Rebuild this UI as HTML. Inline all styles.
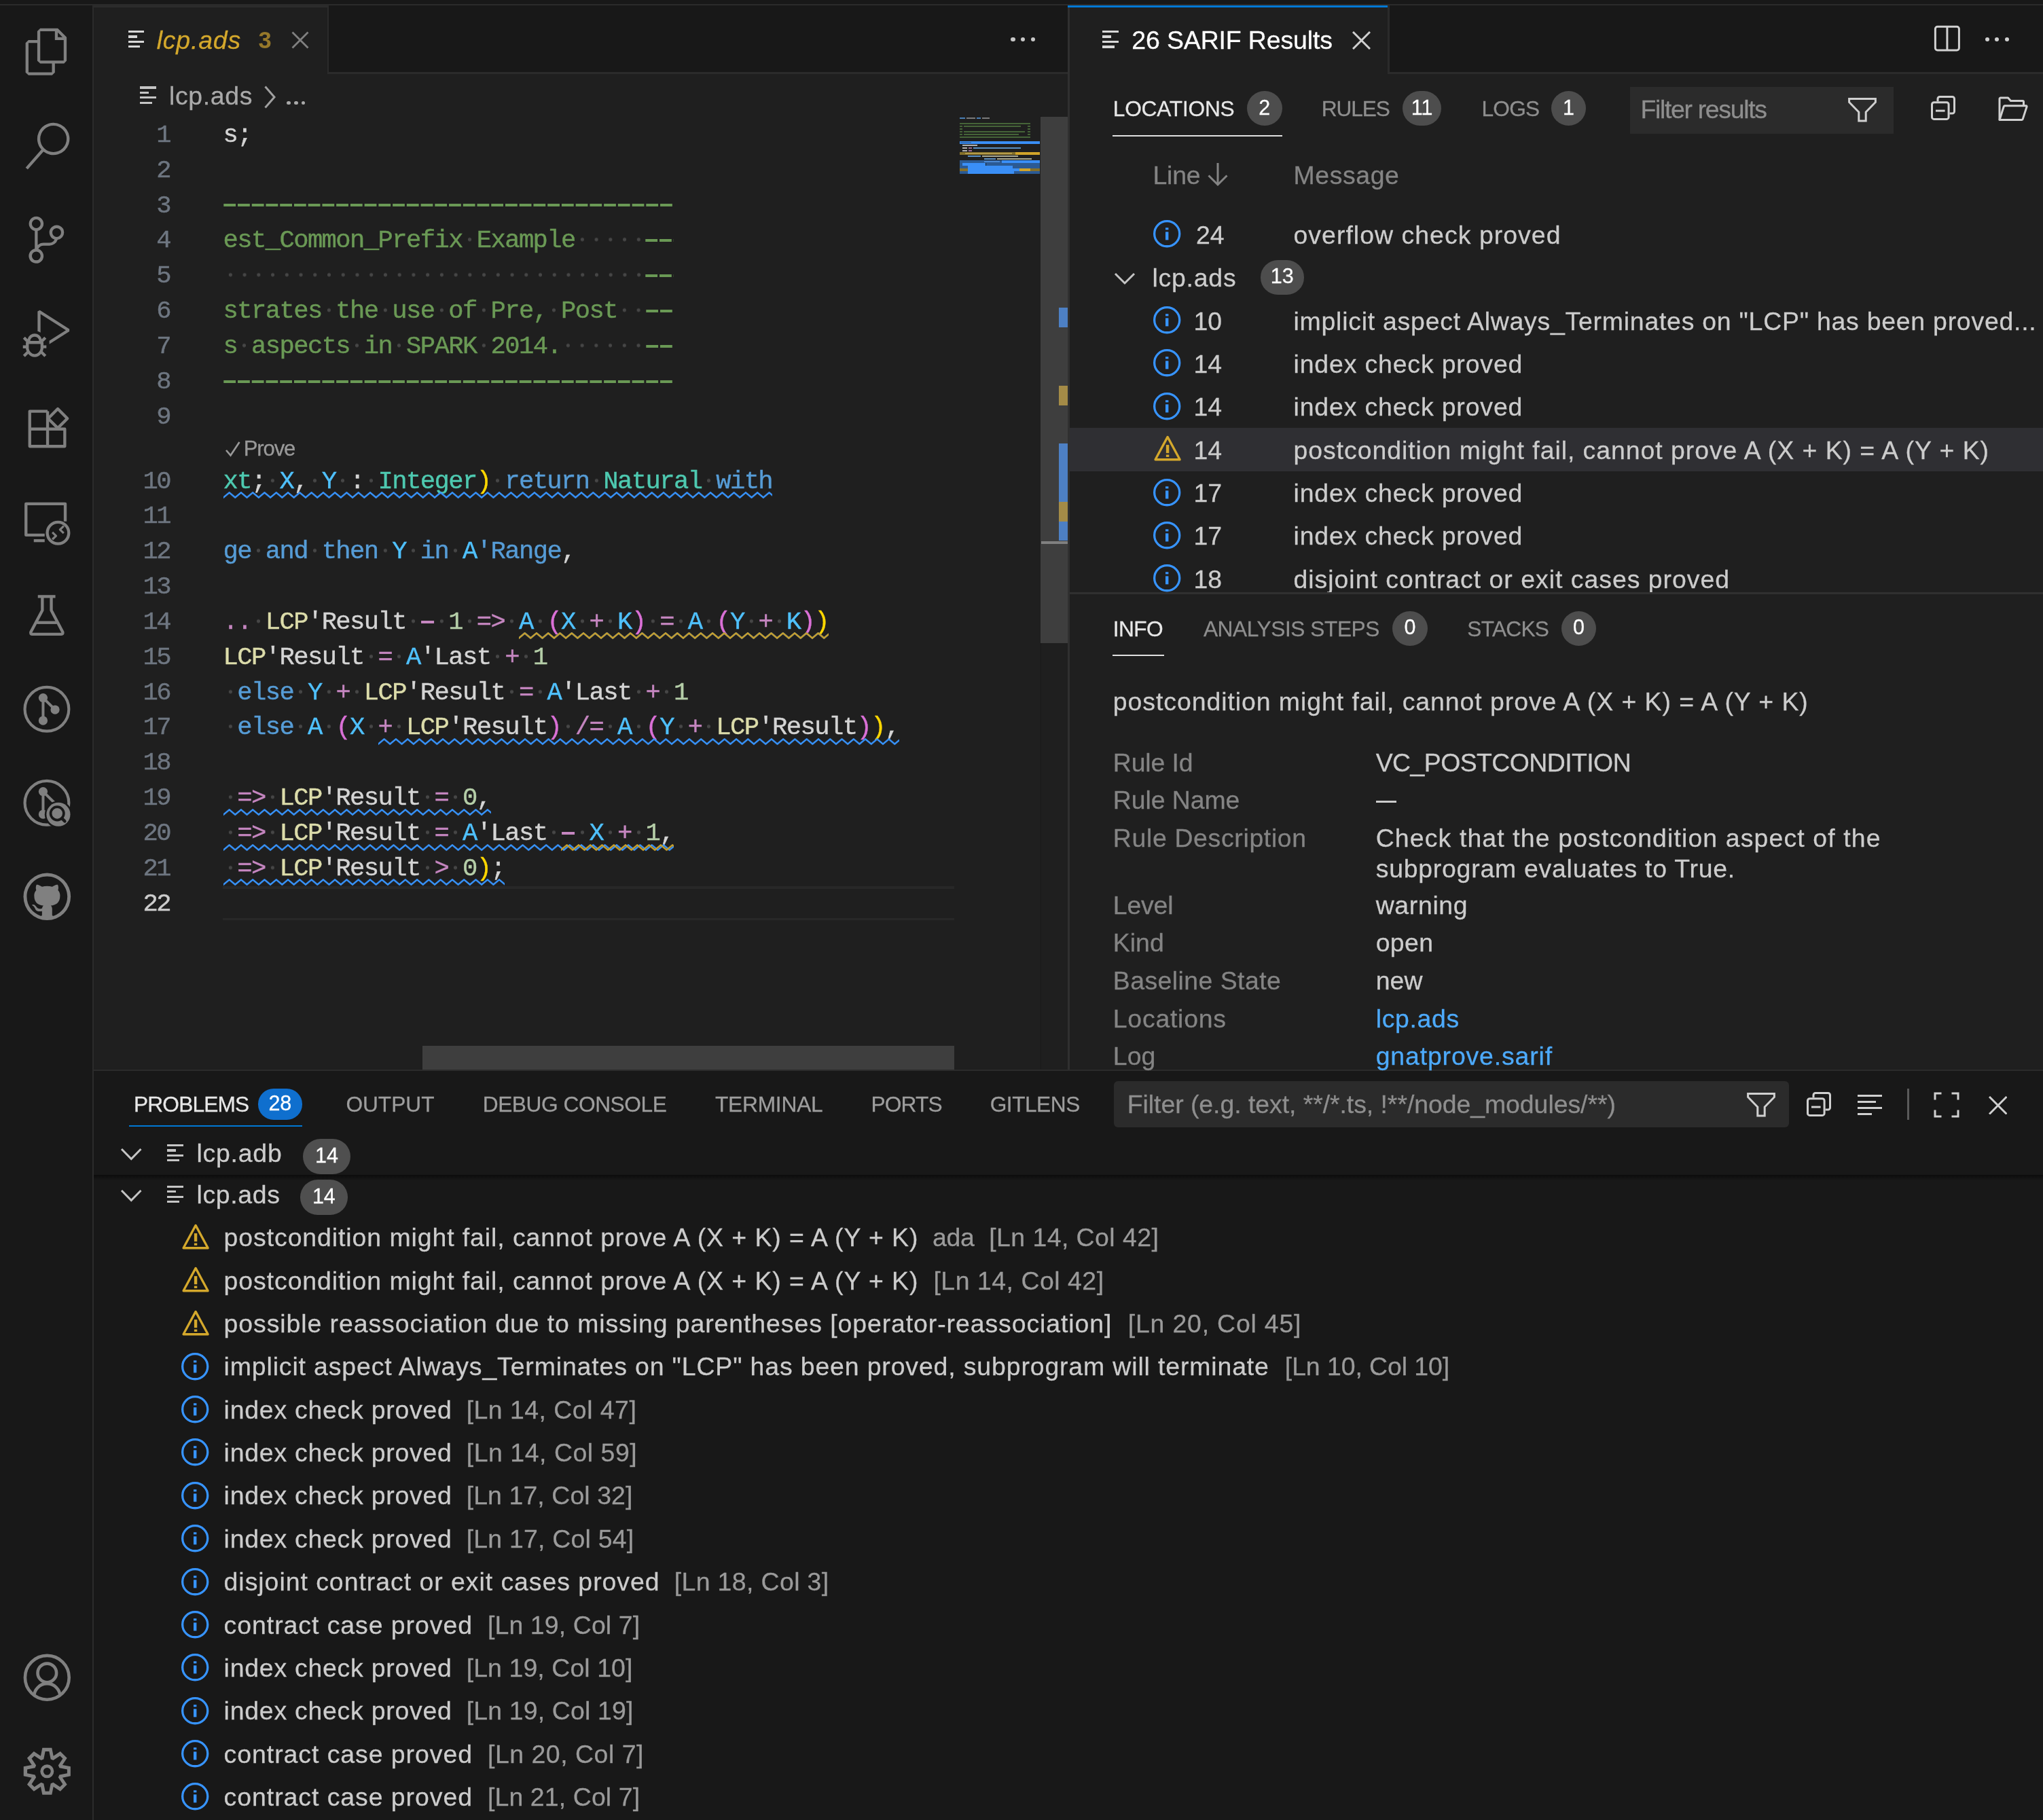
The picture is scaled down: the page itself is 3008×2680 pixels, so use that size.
<!DOCTYPE html>
<html><head><meta charset="utf-8"><title>lcp.ads</title>
<style>
html,body{margin:0;padding:0;background:#181818;overflow:hidden}
#r{position:relative;width:3008px;height:2680px;overflow:hidden;will-change:transform;background:#181818;font-family:'Liberation Sans', sans-serif;color:#cccccc}
#r div,#r svg{position:absolute}
#r span{white-space:pre}
.w{background:radial-gradient(circle,#464646 2.2px,rgba(70,70,70,0) 3.0px) 0 -1.3px/20.736px 100%}
.c{-webkit-text-stroke:0.4px currentColor}
.dm{background:linear-gradient(90deg,#c586c0 18.4px,rgba(197,134,192,0) 18.4px) 0.8px calc(50% + 0.1px)/20.736px 3.8px repeat-x}
.d{background:linear-gradient(90deg,#6a9955 18.2px,rgba(106,153,85,0) 18.2px) 0.3px calc(50% + 0.1px)/20.736px 4.4px repeat-x}
</style></head><body><div id="r">
<div style="left:0px;top:0px;width:3008px;height:6px;background:#181818;"></div>
<div style="left:0px;top:6px;width:3008px;height:2px;background:#2b2b2b;"></div>
<div style="left:0px;top:8px;width:136px;height:2672px;background:#181818;"></div>
<div style="left:136px;top:8px;width:2px;height:2672px;background:#2b2b2b;"></div>
<div style="left:138px;top:8px;width:1434px;height:98px;background:#181818;"></div>
<div style="left:138px;top:106px;width:1434px;height:3px;background:#2b2b2b;"></div>
<div style="left:138px;top:8px;width:344px;height:101px;background:#1f1f1f;"></div>
<div style="left:138px;top:8px;width:344px;height:3px;background:#2b2b2b;"></div>
<div style="left:482px;top:8px;width:2px;height:98px;background:#2b2b2b;"></div>
<div style="left:138px;top:109px;width:1434px;height:1466px;background:#1f1f1f;"></div>
<div style="left:1572px;top:8px;width:3px;height:1567px;background:#303030;"></div>
<div style="left:1575px;top:8px;width:1433px;height:98px;background:#181818;"></div>
<div style="left:1575px;top:106px;width:1433px;height:3px;background:#2b2b2b;"></div>
<div style="left:1575px;top:8px;width:468px;height:101px;background:#1f1f1f;"></div>
<div style="left:1572px;top:8px;width:471px;height:3px;background:#0078d4;"></div>
<div style="left:2043px;top:8px;width:3px;height:98px;background:#2b2b2b;"></div>
<div style="left:1575px;top:109px;width:1433px;height:1466px;background:#1f1f1f;"></div>
<div style="left:138px;top:1575px;width:2870px;height:2.5px;background:#2b2b2b;"></div>
<div style="left:138px;top:1577px;width:2870px;height:1103px;background:#181818;"></div>
<div style="left:188.8px;top:44.9px;width:23.5px;height:3.4px;background:#d7d7d7;"></div>
<div style="left:188.8px;top:52.2px;width:12.9px;height:3.4px;background:#d7d7d7;"></div>
<div style="left:188.8px;top:59.7px;width:23.5px;height:3.4px;background:#d7d7d7;"></div>
<div style="left:188.8px;top:67.1px;width:17.6px;height:3.4px;background:#d7d7d7;"></div>
<div style="left:230.70px;top:32.63px;line-height:52px;font-family:'Liberation Sans', sans-serif;font-size:37.44px;color:#d4a82c;letter-spacing:0.817px;white-space:pre;font-style:italic;-webkit-text-stroke:0.28px;">lcp.ads</div>
<div style="left:380.40px;top:35.45px;line-height:48px;font-family:'Liberation Sans', sans-serif;font-size:34.5px;color:#96782a;letter-spacing:-0.087px;white-space:pre;font-weight:700;">3</div>
<svg style="left:429px;top:45.5px;" width="26" height="26" viewBox="0 0 26 26"><path d="M1.5 1.5 L24.5 24.5 M24.5 1.5 L1.5 24.5" stroke="#808080" stroke-width="2.8" fill="none"/></svg>
<div style="left:1488.3999999999999px;top:54.6px;width:6.4px;height:6.4px;background:#c8c8c8;border-radius:50%"></div>
<div style="left:1503.0px;top:54.6px;width:6.4px;height:6.4px;background:#c8c8c8;border-radius:50%"></div>
<div style="left:1517.6px;top:54.6px;width:6.4px;height:6.4px;background:#c8c8c8;border-radius:50%"></div>
<div style="left:206.3px;top:127.3px;width:24.0px;height:3.4px;background:#c5c5c5;"></div>
<div style="left:206.3px;top:134.6px;width:13.2px;height:3.4px;background:#c5c5c5;"></div>
<div style="left:206.3px;top:142.1px;width:24.0px;height:3.4px;background:#c5c5c5;"></div>
<div style="left:206.3px;top:149.5px;width:18.0px;height:3.4px;background:#c5c5c5;"></div>
<div style="left:249.10px;top:115.23px;line-height:52px;font-family:'Liberation Sans', sans-serif;font-size:37.44px;color:#a9a9a9;letter-spacing:0.617px;white-space:pre;-webkit-text-stroke:0.28px;">lcp.ads</div>
<svg style="left:388px;top:124px;" width="20" height="38" viewBox="0 0 20 38"><path d="M2.5 3.5 L16 19 L2.5 34.5" stroke="#a0a0a0" stroke-width="3" fill="none"/></svg>
<div style="left:422.1px;top:148.6px;width:5.8px;height:5.8px;background:#a9a9a9;border-radius:50%"></div>
<div style="left:432.90000000000003px;top:148.6px;width:5.8px;height:5.8px;background:#a9a9a9;border-radius:50%"></div>
<div style="left:443.70000000000005px;top:148.6px;width:5.8px;height:5.8px;background:#a9a9a9;border-radius:50%"></div>
<div class="c" style="right:2758.084px;top:173.88px;line-height:51.84px;font-family:'Liberation Mono', monospace;font-size:37.2px;color:#6e7681;letter-spacing:-2.584px">1</div>
<div class="c" style="right:2758.084px;top:225.72px;line-height:51.84px;font-family:'Liberation Mono', monospace;font-size:37.2px;color:#6e7681;letter-spacing:-2.584px">2</div>
<div class="c" style="right:2758.084px;top:277.56px;line-height:51.84px;font-family:'Liberation Mono', monospace;font-size:37.2px;color:#6e7681;letter-spacing:-2.584px">3</div>
<div class="c" style="right:2758.084px;top:329.40px;line-height:51.84px;font-family:'Liberation Mono', monospace;font-size:37.2px;color:#6e7681;letter-spacing:-2.584px">4</div>
<div class="c" style="right:2758.084px;top:381.24px;line-height:51.84px;font-family:'Liberation Mono', monospace;font-size:37.2px;color:#6e7681;letter-spacing:-2.584px">5</div>
<div class="c" style="right:2758.084px;top:433.08px;line-height:51.84px;font-family:'Liberation Mono', monospace;font-size:37.2px;color:#6e7681;letter-spacing:-2.584px">6</div>
<div class="c" style="right:2758.084px;top:484.92px;line-height:51.84px;font-family:'Liberation Mono', monospace;font-size:37.2px;color:#6e7681;letter-spacing:-2.584px">7</div>
<div class="c" style="right:2758.084px;top:536.76px;line-height:51.84px;font-family:'Liberation Mono', monospace;font-size:37.2px;color:#6e7681;letter-spacing:-2.584px">8</div>
<div class="c" style="right:2758.084px;top:588.60px;line-height:51.84px;font-family:'Liberation Mono', monospace;font-size:37.2px;color:#6e7681;letter-spacing:-2.584px">9</div>
<div class="c" style="right:2758.084px;top:683.54px;line-height:51.84px;font-family:'Liberation Mono', monospace;font-size:37.2px;color:#6e7681;letter-spacing:-2.584px">10</div>
<div class="c" style="right:2758.084px;top:735.38px;line-height:51.84px;font-family:'Liberation Mono', monospace;font-size:37.2px;color:#6e7681;letter-spacing:-2.584px">11</div>
<div class="c" style="right:2758.084px;top:787.22px;line-height:51.84px;font-family:'Liberation Mono', monospace;font-size:37.2px;color:#6e7681;letter-spacing:-2.584px">12</div>
<div class="c" style="right:2758.084px;top:839.06px;line-height:51.84px;font-family:'Liberation Mono', monospace;font-size:37.2px;color:#6e7681;letter-spacing:-2.584px">13</div>
<div class="c" style="right:2758.084px;top:890.90px;line-height:51.84px;font-family:'Liberation Mono', monospace;font-size:37.2px;color:#6e7681;letter-spacing:-2.584px">14</div>
<div class="c" style="right:2758.084px;top:942.74px;line-height:51.84px;font-family:'Liberation Mono', monospace;font-size:37.2px;color:#6e7681;letter-spacing:-2.584px">15</div>
<div class="c" style="right:2758.084px;top:994.58px;line-height:51.84px;font-family:'Liberation Mono', monospace;font-size:37.2px;color:#6e7681;letter-spacing:-2.584px">16</div>
<div class="c" style="right:2758.084px;top:1046.42px;line-height:51.84px;font-family:'Liberation Mono', monospace;font-size:37.2px;color:#6e7681;letter-spacing:-2.584px">17</div>
<div class="c" style="right:2758.084px;top:1098.26px;line-height:51.84px;font-family:'Liberation Mono', monospace;font-size:37.2px;color:#6e7681;letter-spacing:-2.584px">18</div>
<div class="c" style="right:2758.084px;top:1150.10px;line-height:51.84px;font-family:'Liberation Mono', monospace;font-size:37.2px;color:#6e7681;letter-spacing:-2.584px">19</div>
<div class="c" style="right:2758.084px;top:1201.94px;line-height:51.84px;font-family:'Liberation Mono', monospace;font-size:37.2px;color:#6e7681;letter-spacing:-2.584px">20</div>
<div class="c" style="right:2758.084px;top:1253.78px;line-height:51.84px;font-family:'Liberation Mono', monospace;font-size:37.2px;color:#6e7681;letter-spacing:-2.584px">21</div>
<div class="c" style="right:2758.084px;top:1305.62px;line-height:51.84px;font-family:'Liberation Mono', monospace;font-size:37.2px;color:#cccccc;letter-spacing:-2.584px">22</div>
<div class="c" style="left:328.5px;top:173.88px;line-height:51.84px;height:51.84px;font-family:'Liberation Mono', monospace;font-size:37.2px;letter-spacing:-1.584px;white-space:pre"><span style="color:#d4d4d4">s;</span></div>
<div class="c" style="left:328.5px;top:277.56px;line-height:51.84px;height:51.84px;font-family:'Liberation Mono', monospace;font-size:37.2px;letter-spacing:-1.584px;white-space:pre"><span class="d">                                </span></div>
<div class="c" style="left:328.5px;top:329.40px;line-height:51.84px;height:51.84px;font-family:'Liberation Mono', monospace;font-size:37.2px;letter-spacing:-1.584px;white-space:pre"><span style="color:#6a9955">est_Common_Prefix</span><span class="w"> </span><span style="color:#6a9955">Example</span><span class="w">     </span><span class="d">  </span></div>
<div class="c" style="left:328.5px;top:381.24px;line-height:51.84px;height:51.84px;font-family:'Liberation Mono', monospace;font-size:37.2px;letter-spacing:-1.584px;white-space:pre"><span class="w">                              </span><span class="d">  </span></div>
<div class="c" style="left:328.5px;top:433.08px;line-height:51.84px;height:51.84px;font-family:'Liberation Mono', monospace;font-size:37.2px;letter-spacing:-1.584px;white-space:pre"><span style="color:#6a9955">strates</span><span class="w"> </span><span style="color:#6a9955">the</span><span class="w"> </span><span style="color:#6a9955">use</span><span class="w"> </span><span style="color:#6a9955">of</span><span class="w"> </span><span style="color:#6a9955">Pre,</span><span class="w"> </span><span style="color:#6a9955">Post</span><span class="w">  </span><span class="d">  </span></div>
<div class="c" style="left:328.5px;top:484.92px;line-height:51.84px;height:51.84px;font-family:'Liberation Mono', monospace;font-size:37.2px;letter-spacing:-1.584px;white-space:pre"><span style="color:#6a9955">s</span><span class="w"> </span><span style="color:#6a9955">aspects</span><span class="w"> </span><span style="color:#6a9955">in</span><span class="w"> </span><span style="color:#6a9955">SPARK</span><span class="w"> </span><span style="color:#6a9955">2014.</span><span class="w">      </span><span class="d">  </span></div>
<div class="c" style="left:328.5px;top:536.76px;line-height:51.84px;height:51.84px;font-family:'Liberation Mono', monospace;font-size:37.2px;letter-spacing:-1.584px;white-space:pre"><span class="d">                                </span></div>
<div class="c" style="left:328.5px;top:683.54px;line-height:51.84px;height:51.84px;font-family:'Liberation Mono', monospace;font-size:37.2px;letter-spacing:-1.584px;white-space:pre"><span style="color:#4ec9b0">xt</span><span style="color:#d4d4d4">;</span><span class="w"> </span><span style="color:#4fc1ff">X</span><span style="color:#d4d4d4">,</span><span class="w"> </span><span style="color:#4fc1ff">Y</span><span class="w"> </span><span style="color:#d4d4d4">:</span><span class="w"> </span><span style="color:#4ec9b0">Integer</span><span style="color:#ffd700">)</span><span class="w"> </span><span style="color:#569cd6">return</span><span class="w"> </span><span style="color:#4ec9b0">Natural</span><span class="w"> </span><span style="color:#569cd6">with</span></div>
<div class="c" style="left:328.5px;top:787.22px;line-height:51.84px;height:51.84px;font-family:'Liberation Mono', monospace;font-size:37.2px;letter-spacing:-1.584px;white-space:pre"><span style="color:#569cd6">ge</span><span class="w"> </span><span style="color:#569cd6">and</span><span class="w"> </span><span style="color:#569cd6">then</span><span class="w"> </span><span style="color:#4fc1ff">Y</span><span class="w"> </span><span style="color:#569cd6">in</span><span class="w"> </span><span style="color:#4fc1ff">A</span><span style="color:#569cd6">&#x27;</span><span style="color:#569cd6">Range</span><span style="color:#d4d4d4">,</span></div>
<div class="c" style="left:328.5px;top:890.90px;line-height:51.84px;height:51.84px;font-family:'Liberation Mono', monospace;font-size:37.2px;letter-spacing:-1.584px;white-space:pre"><span style="color:#c586c0">..</span><span class="w"> </span><span style="color:#dcdcaa">LCP</span><span style="color:#d4d4d4">&#x27;Result</span><span class="w"> </span><span class="dm"> </span><span class="w"> </span><span style="color:#b5cea8">1</span><span class="w"> </span><span style="color:#c586c0">=&gt;</span><span class="w"> </span><span style="color:#4fc1ff">A</span><span class="w"> </span><span style="color:#da70d6">(</span><span style="color:#4fc1ff">X</span><span class="w"> </span><span style="color:#c586c0">+</span><span class="w"> </span><span style="color:#4fc1ff">K</span><span style="color:#da70d6">)</span><span class="w"> </span><span style="color:#c586c0">=</span><span class="w"> </span><span style="color:#4fc1ff">A</span><span class="w"> </span><span style="color:#da70d6">(</span><span style="color:#4fc1ff">Y</span><span class="w"> </span><span style="color:#c586c0">+</span><span class="w"> </span><span style="color:#4fc1ff">K</span><span style="color:#da70d6">)</span><span style="color:#ffd700">)</span></div>
<div class="c" style="left:328.5px;top:942.74px;line-height:51.84px;height:51.84px;font-family:'Liberation Mono', monospace;font-size:37.2px;letter-spacing:-1.584px;white-space:pre"><span style="color:#dcdcaa">LCP</span><span style="color:#d4d4d4">&#x27;Result</span><span class="w"> </span><span style="color:#c586c0">=</span><span class="w"> </span><span style="color:#4fc1ff">A</span><span style="color:#d4d4d4">&#x27;Last</span><span class="w"> </span><span style="color:#c586c0">+</span><span class="w"> </span><span style="color:#b5cea8">1</span></div>
<div class="c" style="left:328.5px;top:994.58px;line-height:51.84px;height:51.84px;font-family:'Liberation Mono', monospace;font-size:37.2px;letter-spacing:-1.584px;white-space:pre"><span class="w"> </span><span style="color:#569cd6">else</span><span class="w"> </span><span style="color:#4fc1ff">Y</span><span class="w"> </span><span style="color:#c586c0">+</span><span class="w"> </span><span style="color:#dcdcaa">LCP</span><span style="color:#d4d4d4">&#x27;Result</span><span class="w"> </span><span style="color:#c586c0">=</span><span class="w"> </span><span style="color:#4fc1ff">A</span><span style="color:#d4d4d4">&#x27;Last</span><span class="w"> </span><span style="color:#c586c0">+</span><span class="w"> </span><span style="color:#b5cea8">1</span></div>
<div class="c" style="left:328.5px;top:1046.42px;line-height:51.84px;height:51.84px;font-family:'Liberation Mono', monospace;font-size:37.2px;letter-spacing:-1.584px;white-space:pre"><span class="w"> </span><span style="color:#569cd6">else</span><span class="w"> </span><span style="color:#4fc1ff">A</span><span class="w"> </span><span style="color:#da70d6">(</span><span style="color:#4fc1ff">X</span><span class="w"> </span><span style="color:#c586c0">+</span><span class="w"> </span><span style="color:#dcdcaa">LCP</span><span style="color:#d4d4d4">&#x27;Result</span><span style="color:#da70d6">)</span><span class="w"> </span><span style="color:#c586c0">/=</span><span class="w"> </span><span style="color:#4fc1ff">A</span><span class="w"> </span><span style="color:#da70d6">(</span><span style="color:#4fc1ff">Y</span><span class="w"> </span><span style="color:#c586c0">+</span><span class="w"> </span><span style="color:#dcdcaa">LCP</span><span style="color:#d4d4d4">&#x27;Result</span><span style="color:#da70d6">)</span><span style="color:#ffd700">)</span><span style="color:#d4d4d4">,</span></div>
<div class="c" style="left:328.5px;top:1150.10px;line-height:51.84px;height:51.84px;font-family:'Liberation Mono', monospace;font-size:37.2px;letter-spacing:-1.584px;white-space:pre"><span class="w"> </span><span style="color:#c586c0">=&gt;</span><span class="w"> </span><span style="color:#dcdcaa">LCP</span><span style="color:#d4d4d4">&#x27;Result</span><span class="w"> </span><span style="color:#c586c0">=</span><span class="w"> </span><span style="color:#b5cea8">0</span><span style="color:#d4d4d4">,</span></div>
<div class="c" style="left:328.5px;top:1201.94px;line-height:51.84px;height:51.84px;font-family:'Liberation Mono', monospace;font-size:37.2px;letter-spacing:-1.584px;white-space:pre"><span class="w"> </span><span style="color:#c586c0">=&gt;</span><span class="w"> </span><span style="color:#dcdcaa">LCP</span><span style="color:#d4d4d4">&#x27;Result</span><span class="w"> </span><span style="color:#c586c0">=</span><span class="w"> </span><span style="color:#4fc1ff">A</span><span style="color:#d4d4d4">&#x27;Last</span><span class="w"> </span><span class="dm"> </span><span class="w"> </span><span style="color:#4fc1ff">X</span><span class="w"> </span><span style="color:#c586c0">+</span><span class="w"> </span><span style="color:#b5cea8">1</span><span style="color:#d4d4d4">,</span></div>
<div class="c" style="left:328.5px;top:1253.78px;line-height:51.84px;height:51.84px;font-family:'Liberation Mono', monospace;font-size:37.2px;letter-spacing:-1.584px;white-space:pre"><span class="w"> </span><span style="color:#c586c0">=&gt;</span><span class="w"> </span><span style="color:#dcdcaa">LCP</span><span style="color:#d4d4d4">&#x27;Result</span><span class="w"> </span><span style="color:#c586c0">&gt;</span><span class="w"> </span><span style="color:#b5cea8">0</span><span style="color:#ffd700">)</span><span style="color:#d4d4d4">;</span></div>
<svg style="left:331px;top:648px;" width="24" height="26" viewBox="0 0 24 26"><path d="M2 15 L8.5 22.5 L21.5 3" stroke="#999" stroke-width="2.6" fill="none"/></svg>
<div style="left:358.80px;top:638.82px;line-height:44px;font-family:'Liberation Sans', sans-serif;font-size:31.1px;color:#999999;letter-spacing:-1.167px;white-space:pre;-webkit-text-stroke:0.28px;">Prove</div>
<div style="left:328px;top:1305px;width:1077px;height:3.5px;background:#282828;"></div>
<div style="left:328px;top:1351.7px;width:1077px;height:3.5px;background:#282828;"></div>
<svg style="left:328.5px;top:724.1px" width="808.7" height="11" viewBox="0 0 808.7 11"><defs><pattern id="sq1" width="17.28" height="11" patternUnits="userSpaceOnUse"><path d="M-1 9.6 L0 8.6 L8.64 1.4 L17.28 8.6 L18.28 9.6" stroke="#3794ff" stroke-width="2.5" fill="none"/></pattern></defs><rect width="100%" height="11" fill="url(#sq1)"/></svg>
<svg style="left:764.0px;top:931.4px" width="456.2" height="11" viewBox="0 0 456.2 11"><defs><pattern id="sq2" width="17.28" height="11" patternUnits="userSpaceOnUse"><path d="M-1 9.6 L0 8.6 L8.64 1.4 L17.28 8.6 L18.28 9.6" stroke="#2f6fbf" stroke-width="2.5" fill="none"/></pattern></defs><rect width="100%" height="11" fill="url(#sq2)"/></svg>
<svg style="left:764.0px;top:931.4px" width="456.2" height="11" viewBox="0 0 456.2 11"><defs><pattern id="sq3" width="17.28" height="11" patternUnits="userSpaceOnUse"><path d="M-1 9.6 L0 8.6 L8.64 1.4 L17.28 8.6 L18.28 9.6" stroke="#c9a02a" stroke-width="2.5" fill="none"/></pattern></defs><rect width="100%" height="11" fill="url(#sq3)"/></svg>
<svg style="left:556.6px;top:1086.9px" width="767.2" height="11" viewBox="0 0 767.2 11"><defs><pattern id="sq4" width="17.28" height="11" patternUnits="userSpaceOnUse"><path d="M-1 9.6 L0 8.6 L8.64 1.4 L17.28 8.6 L18.28 9.6" stroke="#3794ff" stroke-width="2.5" fill="none"/></pattern></defs><rect width="100%" height="11" fill="url(#sq4)"/></svg>
<svg style="left:328.5px;top:1190.6px" width="394.0" height="11" viewBox="0 0 394.0 11"><defs><pattern id="sq5" width="17.28" height="11" patternUnits="userSpaceOnUse"><path d="M-1 9.6 L0 8.6 L8.64 1.4 L17.28 8.6 L18.28 9.6" stroke="#3794ff" stroke-width="2.5" fill="none"/></pattern></defs><rect width="100%" height="11" fill="url(#sq5)"/></svg>
<svg style="left:328.5px;top:1242.5px" width="663.6" height="11" viewBox="0 0 663.6 11"><defs><pattern id="sq6" width="17.28" height="11" patternUnits="userSpaceOnUse"><path d="M-1 9.6 L0 8.6 L8.64 1.4 L17.28 8.6 L18.28 9.6" stroke="#3794ff" stroke-width="2.5" fill="none"/></pattern></defs><rect width="100%" height="11" fill="url(#sq6)"/></svg>
<svg style="left:826.2px;top:1242.5px" width="165.9" height="11" viewBox="0 0 165.9 11"><defs><pattern id="sq7" width="17.28" height="11" patternUnits="userSpaceOnUse"><path d="M-1 9.6 L0 8.6 L8.64 1.4 L17.28 8.6 L18.28 9.6" stroke="#c9a02a" stroke-width="2.5" fill="none"/></pattern></defs><rect width="100%" height="11" fill="url(#sq7)"/></svg>
<svg style="left:328.5px;top:1294.3px" width="414.7" height="11" viewBox="0 0 414.7 11"><defs><pattern id="sq8" width="17.28" height="11" patternUnits="userSpaceOnUse"><path d="M-1 9.6 L0 8.6 L8.64 1.4 L17.28 8.6 L18.28 9.6" stroke="#3794ff" stroke-width="2.5" fill="none"/></pattern></defs><rect width="100%" height="11" fill="url(#sq8)"/></svg>
<div style="left:1531.5px;top:170px;width:1.5px;height:1404px;background:#191919;"></div>
<div style="left:1532px;top:172px;width:40px;height:775px;background:#3e3e3e;"></div>
<div style="left:1559px;top:453px;width:13px;height:29px;background:#4d80c4;"></div>
<div style="left:1559px;top:568px;width:13px;height:29px;background:#a48b47;"></div>
<div style="left:1559px;top:653px;width:13px;height:86px;background:#4d80c4;"></div>
<div style="left:1559px;top:739px;width:13px;height:29px;background:#a48b47;"></div>
<div style="left:1559px;top:768px;width:13px;height:28px;background:#4d80c4;"></div>
<div style="left:1533px;top:796.5px;width:39px;height:4.8px;background:#808080;"></div>
<div style="left:621.9px;top:1540px;width:783px;height:35px;background:#3e3e3e;"></div>
<div style="left:1413px;top:172.6px;width:8px;height:2.2px;background:#4a7fb5;"></div>
<div style="left:1423px;top:172.6px;width:13px;height:2.2px;background:#7a7a7a;"></div>
<div style="left:1438px;top:172.6px;width:6px;height:2.2px;background:#4a7fb5;"></div>
<div style="left:1446px;top:172.6px;width:11px;height:2.2px;background:#7a7a7a;"></div>
<div style="left:1413px;top:181.0px;width:104px;height:1.6px;background:#456438;"></div>
<div style="left:1413px;top:201.1px;width:104px;height:1.6px;background:#456438;"></div>
<div style="left:1413px;top:184.7px;width:4px;height:2.2px;background:#456438;"></div>
<div style="left:1419px;top:184.7px;width:84px;height:2.2px;background:#456438;"></div>
<div style="left:1513px;top:184.7px;width:4px;height:2.2px;background:#456438;"></div>
<div style="left:1413px;top:192.8px;width:4px;height:2.2px;background:#456438;"></div>
<div style="left:1419px;top:192.8px;width:90px;height:2.2px;background:#456438;"></div>
<div style="left:1513px;top:192.8px;width:4px;height:2.2px;background:#456438;"></div>
<div style="left:1413px;top:196.8px;width:4px;height:2.2px;background:#456438;"></div>
<div style="left:1419px;top:196.8px;width:81px;height:2.2px;background:#456438;"></div>
<div style="left:1513px;top:196.8px;width:4px;height:2.2px;background:#456438;"></div>
<div style="left:1413px;top:188.7px;width:4px;height:2.2px;background:#456438;"></div>
<div style="left:1513px;top:188.7px;width:4px;height:2.2px;background:#456438;"></div>
<div style="left:1413px;top:207.9px;width:118px;height:4.1px;background:#3a8ff7;"></div>
<div style="left:1414px;top:208.9px;width:16px;height:2.2px;background:#2f6fbe;"></div>
<div style="left:1416.8px;top:212.9px;width:21.9px;height:2.2px;background:#b0b0b0;"></div>
<div style="left:1416.8px;top:216.9px;width:7.2px;height:2.2px;background:#b0b0b0;"></div>
<div style="left:1426px;top:216.9px;width:5px;height:2.2px;background:#9a6d98;"></div>
<div style="left:1433px;top:216.9px;width:70px;height:2.2px;background:#5b8fc2;"></div>
<div style="left:1416.8px;top:221.0px;width:7.7px;height:2.2px;background:#b0b0b0;"></div>
<div style="left:1426px;top:221.0px;width:5.3px;height:2.2px;background:#9a6d98;"></div>
<div style="left:1413px;top:224.0px;width:81.5px;height:4.1px;background:#85702a;"></div>
<div style="left:1494.5px;top:224.0px;width:36.5px;height:4.1px;background:#d1a42a;"></div>
<div style="left:1421px;top:225.1px;width:69px;height:2.0px;background:#b39a4a;"></div>
<div style="left:1424.6px;top:229.0px;width:19.4px;height:2.2px;background:#5b8fc2;"></div>
<div style="left:1446px;top:229.0px;width:53px;height:2.2px;background:#a8a890;"></div>
<div style="left:1448.5px;top:233.0px;width:17.5px;height:2.2px;background:#5b8fc2;"></div>
<div style="left:1468px;top:233.0px;width:51.4px;height:2.2px;background:#a8a890;"></div>
<div style="left:1413px;top:236.1px;width:62px;height:4.1px;background:#2b5a94;"></div>
<div style="left:1475px;top:236.1px;width:56px;height:4.1px;background:#3a8ff7;"></div>
<div style="left:1448.5px;top:237.2px;width:23.5px;height:2.0px;background:#4a86cf;"></div>
<div style="left:1413px;top:240.2px;width:3.8px;height:4.1px;background:#2b5a94;"></div>
<div style="left:1416.8px;top:240.2px;width:34.7px;height:4.1px;background:#3a8ff7;"></div>
<div style="left:1451.5px;top:240.2px;width:79.5px;height:4.1px;background:#2b5a94;"></div>
<div style="left:1413px;top:244.2px;width:12px;height:4.1px;background:#2b5a94;"></div>
<div style="left:1425px;top:244.2px;width:66.2px;height:4.1px;background:#3a8ff7;"></div>
<div style="left:1491.2px;top:244.2px;width:39.8px;height:4.1px;background:#2b5a94;"></div>
<div style="left:1413px;top:248.2px;width:12px;height:4.1px;background:#85702a;"></div>
<div style="left:1425px;top:248.2px;width:76px;height:4.1px;background:#3a8ff7;"></div>
<div style="left:1501px;top:248.2px;width:16px;height:4.1px;background:#d1a42a;"></div>
<div style="left:1517px;top:248.2px;width:14px;height:4.1px;background:#85702a;"></div>
<div style="left:1413px;top:252.2px;width:12px;height:4.1px;background:#2b5a94;"></div>
<div style="left:1425px;top:252.2px;width:68px;height:4.1px;background:#3a8ff7;"></div>
<div style="left:1493px;top:252.2px;width:38px;height:4.1px;background:#2b5a94;"></div>
<div style="left:1622.8px;top:45.0px;width:24.0px;height:3.4px;background:#d8d8d8;"></div>
<div style="left:1622.8px;top:52.3px;width:13.2px;height:3.4px;background:#d8d8d8;"></div>
<div style="left:1622.8px;top:59.8px;width:24.0px;height:3.4px;background:#d8d8d8;"></div>
<div style="left:1622.8px;top:67.2px;width:18.0px;height:3.4px;background:#d8d8d8;"></div>
<div style="left:1666.30px;top:33.03px;line-height:52px;font-family:'Liberation Sans', sans-serif;font-size:37.44px;color:#ffffff;letter-spacing:-0.119px;white-space:pre;-webkit-text-stroke:0.28px;">26 SARIF Results</div>
<svg style="left:1990.5px;top:45.5px;" width="27" height="27" viewBox="-1 -1 27 27"><path d="M0 0 L25 25 M25 0 L0 25" stroke="#d0d0d0" stroke-width="3.0" fill="none"/></svg>
<svg style="left:2846px;top:36px;" width="42" height="42" viewBox="0 0 42 42"><rect x="3.4" y="3.3" width="35" height="34.6" rx="3.2" fill="none" stroke="#d0d0d0" stroke-width="3"/><path d="M20.9 3.3 V37.9" stroke="#d0d0d0" stroke-width="3"/></svg>
<div style="left:2922.9px;top:54.7px;width:6.2px;height:6.2px;background:#d0d0d0;border-radius:50%"></div>
<div style="left:2937.3px;top:54.7px;width:6.2px;height:6.2px;background:#d0d0d0;border-radius:50%"></div>
<div style="left:2951.8px;top:54.7px;width:6.2px;height:6.2px;background:#d0d0d0;border-radius:50%"></div>
<div style="left:1638.80px;top:138.02px;line-height:44px;font-family:'Liberation Sans', sans-serif;font-size:31.68px;color:#e7e7e7;letter-spacing:-0.221px;white-space:pre;-webkit-text-stroke:0.28px;">LOCATIONS</div>
<div style="left:1836px;top:133.8px;width:51.6px;height:51.6px;background:#4d4d4d;border-radius:25.8px"></div>
<div style="left:1853.32px;top:136.53px;line-height:43px;font-family:'Liberation Sans', sans-serif;font-size:30.5px;color:#ffffff;letter-spacing:0.000px;white-space:pre;-webkit-text-stroke:0.28px;">2</div>
<div style="left:1638px;top:198.6px;width:250px;height:2.6px;background:#e0e0e0;"></div>
<div style="left:1945.70px;top:138.12px;line-height:44px;font-family:'Liberation Sans', sans-serif;font-size:31.68px;color:#8e8e8e;letter-spacing:-1.082px;white-space:pre;-webkit-text-stroke:0.28px;">RULES</div>
<div style="left:2065px;top:133.8px;width:57.3px;height:51.6px;background:#4d4d4d;border-radius:25.8px"></div>
<div style="left:2077.81px;top:136.53px;line-height:43px;font-family:'Liberation Sans', sans-serif;font-size:30.5px;color:#ffffff;letter-spacing:0.000px;white-space:pre;-webkit-text-stroke:0.28px;">11</div>
<div style="left:2181.50px;top:138.12px;line-height:44px;font-family:'Liberation Sans', sans-serif;font-size:31.68px;color:#8e8e8e;letter-spacing:-0.779px;white-space:pre;-webkit-text-stroke:0.28px;">LOGS</div>
<div style="left:2283.7px;top:133.8px;width:51.8px;height:51.6px;background:#4d4d4d;border-radius:25.8px"></div>
<div style="left:2301.12px;top:136.53px;line-height:43px;font-family:'Liberation Sans', sans-serif;font-size:30.5px;color:#ffffff;letter-spacing:0.000px;white-space:pre;-webkit-text-stroke:0.28px;">1</div>
<div style="left:2400px;top:128.2px;width:388px;height:68.6px;background:#2b2b2b;"></div>
<div style="left:2415.40px;top:134.73px;line-height:52px;font-family:'Liberation Sans', sans-serif;font-size:37.44px;color:#8e8e8e;letter-spacing:-1.320px;white-space:pre;-webkit-text-stroke:0.28px;">Filter results</div>
<svg style="left:2721.2px;top:143.6px;" width="42" height="36" viewBox="0 0 42 36"><path d="M1.6 1.6 H40.4 V6.5 L26.2 21 V34 H15.8 V21 L1.6 6.5 Z" fill="none" stroke="#d0d0d0" stroke-width="3" stroke-linejoin="miter"/></svg>
<svg style="left:2843.4px;top:140.8px;" width="36" height="36" viewBox="0 0 36 36"><path d="M10 8.3 V4.5 a3 3 0 0 1 3 -3 H31.5 a3 3 0 0 1 3 3 V23 a3 3 0 0 1 -3 3 H27.6" fill="none" stroke="#d0d0d0" stroke-width="3"/><rect x="1.5" y="9.8" width="24.6" height="24.6" rx="3" fill="none" stroke="#d0d0d0" stroke-width="3"/><path d="M7 22.1 H20.6" stroke="#d0d0d0" stroke-width="3"/></svg>
<svg style="left:2941px;top:140.5px;" width="46" height="38" viewBox="0 0 46 38"><path d="M3 35.5 V4.5 a1.5 1.5 0 0 1 1.5 -1.5 H15.5 L19.5 7.5 H37 a1.5 1.5 0 0 1 1.5 1.5 V14.8" fill="none" stroke="#d0d0d0" stroke-width="3" stroke-linejoin="round"/><path d="M3 35.5 L9.3 15.8 a1.5 1.5 0 0 1 1.4 -1 H42.2 a1 1 0 0 1 0.9 1.3 L37.2 34.4 a1.5 1.5 0 0 1 -1.4 1.1 Z" fill="none" stroke="#d0d0d0" stroke-width="3" stroke-linejoin="round"/></svg>
<div style="left:1697.50px;top:231.73px;line-height:52px;font-family:'Liberation Sans', sans-serif;font-size:37.44px;color:#848484;letter-spacing:-0.191px;white-space:pre;-webkit-text-stroke:0.28px;">Line</div>
<svg style="left:1776px;top:238px;" width="34" height="38" viewBox="0 0 34 38"><path d="M17 2 V33 M3.5 20.5 L17 34 L30.5 20.5" fill="none" stroke="#848484" stroke-width="3"/></svg>
<div style="left:1904.50px;top:231.73px;line-height:52px;font-family:'Liberation Sans', sans-serif;font-size:37.44px;color:#848484;letter-spacing:0.594px;white-space:pre;-webkit-text-stroke:0.28px;">Message</div>
<div style="left:1575px;top:630.3px;width:1433px;height:63.4px;background:#2f2f33;"></div>
<svg style="left:1697.0px;top:323.3px;" width="42.4" height="42.4" viewBox="-21.2 -21.2 42.4 42.4"><circle r="18.55" fill="none" stroke="#3794ff" stroke-width="3.3"/><rect x="-2.2" y="-2.8" width="4.4" height="12" fill="#3794ff"/><rect x="-2.2" y="-8.9" width="4.4" height="3.1" fill="#3794ff"/></svg>
<div style="left:1761.00px;top:319.83px;line-height:52px;font-family:'Liberation Sans', sans-serif;font-size:37.44px;color:#cccccc;letter-spacing:-0.062px;white-space:pre;-webkit-text-stroke:0.28px;">24</div>
<div style="left:1904.50px;top:319.83px;line-height:52px;font-family:'Liberation Sans', sans-serif;font-size:37.44px;color:#cccccc;letter-spacing:1.032px;white-space:pre;-webkit-text-stroke:0.28px;">overflow check proved</div>
<svg style="left:1639.8px;top:401.0px;" width="32" height="19" viewBox="-2 -2 32 19"><path d="M0 0 L14.0 14 L28 0" fill="none" stroke="#c5c5c5" stroke-width="3.0"/></svg>
<div style="left:1696.50px;top:383.19px;line-height:52px;font-family:'Liberation Sans', sans-serif;font-size:37.44px;color:#cccccc;letter-spacing:0.760px;white-space:pre;-webkit-text-stroke:0.28px;">lcp.ads</div>
<div style="left:1855.6px;top:383.1px;width:64.1px;height:50.6px;background:#4d4d4d;border-radius:25.3px"></div>
<div style="left:1870.68px;top:385.33px;line-height:43px;font-family:'Liberation Sans', sans-serif;font-size:30.5px;color:#ffffff;letter-spacing:0.000px;white-space:pre;-webkit-text-stroke:0.28px;">13</div>
<svg style="left:1697.0px;top:450.0px;" width="42.4" height="42.4" viewBox="-21.2 -21.2 42.4 42.4"><circle r="18.55" fill="none" stroke="#3794ff" stroke-width="3.3"/><rect x="-2.2" y="-2.8" width="4.4" height="12" fill="#3794ff"/><rect x="-2.2" y="-8.9" width="4.4" height="3.1" fill="#3794ff"/></svg>
<div style="left:1757.60px;top:446.55px;line-height:52px;font-family:'Liberation Sans', sans-serif;font-size:37.44px;color:#cccccc;letter-spacing:-0.062px;white-space:pre;-webkit-text-stroke:0.28px;">10</div>
<div style="left:1904.50px;top:446.55px;line-height:52px;font-family:'Liberation Sans', sans-serif;font-size:37.44px;color:#cccccc;letter-spacing:0.756px;white-space:pre;-webkit-text-stroke:0.28px;">implicit aspect Always_Terminates on &quot;LCP&quot; has been proved...</div>
<svg style="left:1697.0px;top:513.4px;" width="42.4" height="42.4" viewBox="-21.2 -21.2 42.4 42.4"><circle r="18.55" fill="none" stroke="#3794ff" stroke-width="3.3"/><rect x="-2.2" y="-2.8" width="4.4" height="12" fill="#3794ff"/><rect x="-2.2" y="-8.9" width="4.4" height="3.1" fill="#3794ff"/></svg>
<div style="left:1757.60px;top:509.91px;line-height:52px;font-family:'Liberation Sans', sans-serif;font-size:37.44px;color:#cccccc;letter-spacing:-0.062px;white-space:pre;-webkit-text-stroke:0.28px;">14</div>
<div style="left:1904.50px;top:509.91px;line-height:52px;font-family:'Liberation Sans', sans-serif;font-size:37.44px;color:#cccccc;letter-spacing:0.848px;white-space:pre;-webkit-text-stroke:0.28px;">index check proved</div>
<svg style="left:1697.0px;top:576.7px;" width="42.4" height="42.4" viewBox="-21.2 -21.2 42.4 42.4"><circle r="18.55" fill="none" stroke="#3794ff" stroke-width="3.3"/><rect x="-2.2" y="-2.8" width="4.4" height="12" fill="#3794ff"/><rect x="-2.2" y="-8.9" width="4.4" height="3.1" fill="#3794ff"/></svg>
<div style="left:1757.60px;top:573.27px;line-height:52px;font-family:'Liberation Sans', sans-serif;font-size:37.44px;color:#cccccc;letter-spacing:-0.062px;white-space:pre;-webkit-text-stroke:0.28px;">14</div>
<div style="left:1904.50px;top:573.27px;line-height:52px;font-family:'Liberation Sans', sans-serif;font-size:37.44px;color:#cccccc;letter-spacing:0.848px;white-space:pre;-webkit-text-stroke:0.28px;">index check proved</div>
<svg style="left:1697.6px;top:640.4px;" width="42.2" height="39.4" viewBox="-1 -1 42.2 39.4"><path d="M20.1 2.376 L38.154 35.75 L2.046 35.75 Z" fill="none" stroke="#d4a82c" stroke-width="3.3" stroke-linejoin="round"/><rect x="17.900000000000002" y="14.1" width="4.4" height="12.1" fill="#d4a82c"/><rect x="17.900000000000002" y="28.6" width="4.4" height="3.3" fill="#d4a82c"/></svg>
<div style="left:1757.60px;top:636.63px;line-height:52px;font-family:'Liberation Sans', sans-serif;font-size:37.44px;color:#cccccc;letter-spacing:-0.062px;white-space:pre;-webkit-text-stroke:0.28px;">14</div>
<div style="left:1904.50px;top:636.63px;line-height:52px;font-family:'Liberation Sans', sans-serif;font-size:37.44px;color:#cccccc;letter-spacing:0.948px;white-space:pre;-webkit-text-stroke:0.28px;">postcondition might fail, cannot prove A (X + K) = A (Y + K)</div>
<svg style="left:1697.0px;top:703.5px;" width="42.4" height="42.4" viewBox="-21.2 -21.2 42.4 42.4"><circle r="18.55" fill="none" stroke="#3794ff" stroke-width="3.3"/><rect x="-2.2" y="-2.8" width="4.4" height="12" fill="#3794ff"/><rect x="-2.2" y="-8.9" width="4.4" height="3.1" fill="#3794ff"/></svg>
<div style="left:1757.60px;top:699.99px;line-height:52px;font-family:'Liberation Sans', sans-serif;font-size:37.44px;color:#cccccc;letter-spacing:-0.062px;white-space:pre;-webkit-text-stroke:0.28px;">17</div>
<div style="left:1904.50px;top:699.99px;line-height:52px;font-family:'Liberation Sans', sans-serif;font-size:37.44px;color:#cccccc;letter-spacing:0.848px;white-space:pre;-webkit-text-stroke:0.28px;">index check proved</div>
<svg style="left:1697.0px;top:766.8px;" width="42.4" height="42.4" viewBox="-21.2 -21.2 42.4 42.4"><circle r="18.55" fill="none" stroke="#3794ff" stroke-width="3.3"/><rect x="-2.2" y="-2.8" width="4.4" height="12" fill="#3794ff"/><rect x="-2.2" y="-8.9" width="4.4" height="3.1" fill="#3794ff"/></svg>
<div style="left:1757.60px;top:763.35px;line-height:52px;font-family:'Liberation Sans', sans-serif;font-size:37.44px;color:#cccccc;letter-spacing:-0.062px;white-space:pre;-webkit-text-stroke:0.28px;">17</div>
<div style="left:1904.50px;top:763.35px;line-height:52px;font-family:'Liberation Sans', sans-serif;font-size:37.44px;color:#cccccc;letter-spacing:0.848px;white-space:pre;-webkit-text-stroke:0.28px;">index check proved</div>
<svg style="left:1697.0px;top:830.2px;" width="42.4" height="42.4" viewBox="-21.2 -21.2 42.4 42.4"><circle r="18.55" fill="none" stroke="#3794ff" stroke-width="3.3"/><rect x="-2.2" y="-2.8" width="4.4" height="12" fill="#3794ff"/><rect x="-2.2" y="-8.9" width="4.4" height="3.1" fill="#3794ff"/></svg>
<div style="left:1757.60px;top:826.71px;line-height:52px;font-family:'Liberation Sans', sans-serif;font-size:37.44px;color:#cccccc;letter-spacing:-0.062px;white-space:pre;-webkit-text-stroke:0.28px;">18</div>
<div style="left:1904.50px;top:826.71px;line-height:52px;font-family:'Liberation Sans', sans-serif;font-size:37.44px;color:#cccccc;letter-spacing:0.982px;white-space:pre;-webkit-text-stroke:0.28px;">disjoint contract or exit cases proved</div>
<div style="left:1575px;top:873px;width:1433px;height:701px;background:#1f1f1f;"></div>
<div style="left:1575px;top:872px;width:1433px;height:3px;background:#303030;"></div>
<div style="left:1638.80px;top:903.82px;line-height:44px;font-family:'Liberation Sans', sans-serif;font-size:31.68px;color:#e7e7e7;letter-spacing:-0.614px;white-space:pre;-webkit-text-stroke:0.28px;">INFO</div>
<div style="left:1638px;top:963.9px;width:76px;height:2.5px;background:#e0e0e0;"></div>
<div style="left:1771.90px;top:903.82px;line-height:44px;font-family:'Liberation Sans', sans-serif;font-size:31.68px;color:#8e8e8e;letter-spacing:-0.437px;white-space:pre;-webkit-text-stroke:0.28px;">ANALYSIS STEPS</div>
<div style="left:2049.8px;top:899.6px;width:52.2px;height:51.4px;background:#4d4d4d;border-radius:25.7px"></div>
<div style="left:2067.42px;top:902.23px;line-height:43px;font-family:'Liberation Sans', sans-serif;font-size:30.5px;color:#ffffff;letter-spacing:0.000px;white-space:pre;-webkit-text-stroke:0.28px;">0</div>
<div style="left:2160.30px;top:903.82px;line-height:44px;font-family:'Liberation Sans', sans-serif;font-size:31.68px;color:#8e8e8e;letter-spacing:-0.746px;white-space:pre;-webkit-text-stroke:0.28px;">STACKS</div>
<div style="left:2298.5px;top:899.6px;width:51.8px;height:51.4px;background:#4d4d4d;border-radius:25.7px"></div>
<div style="left:2315.92px;top:902.23px;line-height:43px;font-family:'Liberation Sans', sans-serif;font-size:30.5px;color:#ffffff;letter-spacing:0.000px;white-space:pre;-webkit-text-stroke:0.28px;">0</div>
<div style="left:1638.80px;top:1006.83px;line-height:52px;font-family:'Liberation Sans', sans-serif;font-size:37.44px;color:#cccccc;letter-spacing:0.939px;white-space:pre;-webkit-text-stroke:0.28px;">postcondition might fail, cannot prove A (X + K) = A (Y + K)</div>
<div style="left:1638.80px;top:1096.93px;line-height:52px;font-family:'Liberation Sans', sans-serif;font-size:37.44px;color:#848484;letter-spacing:-0.154px;white-space:pre;-webkit-text-stroke:0.28px;">Rule Id</div>
<div style="left:2025.70px;top:1096.93px;line-height:52px;font-family:'Liberation Sans', sans-serif;font-size:37.44px;color:#cccccc;letter-spacing:-0.579px;white-space:pre;-webkit-text-stroke:0.28px;">VC_POSTCONDITION</div>
<div style="left:1638.80px;top:1151.93px;line-height:52px;font-family:'Liberation Sans', sans-serif;font-size:37.44px;color:#848484;letter-spacing:-0.076px;white-space:pre;-webkit-text-stroke:0.28px;">Rule Name</div>
<div style="left:2025.7px;top:1179.2px;width:30px;height:3px;background:#cccccc;"></div>
<div style="left:1638.80px;top:1207.83px;line-height:52px;font-family:'Liberation Sans', sans-serif;font-size:37.44px;color:#848484;letter-spacing:0.653px;white-space:pre;-webkit-text-stroke:0.28px;">Rule Description</div>
<div style="left:2025.70px;top:1207.83px;line-height:52px;font-family:'Liberation Sans', sans-serif;font-size:37.44px;color:#cccccc;letter-spacing:1.121px;white-space:pre;-webkit-text-stroke:0.28px;">Check that the postcondition aspect of the</div>
<div style="left:2025.70px;top:1252.73px;line-height:52px;font-family:'Liberation Sans', sans-serif;font-size:37.44px;color:#cccccc;letter-spacing:0.750px;white-space:pre;-webkit-text-stroke:0.28px;">subprogram evaluates to True.</div>
<div style="left:1638.80px;top:1306.73px;line-height:52px;font-family:'Liberation Sans', sans-serif;font-size:37.44px;color:#848484;letter-spacing:-0.194px;white-space:pre;-webkit-text-stroke:0.28px;">Level</div>
<div style="left:2025.70px;top:1306.73px;line-height:52px;font-family:'Liberation Sans', sans-serif;font-size:37.44px;color:#cccccc;letter-spacing:0.648px;white-space:pre;-webkit-text-stroke:0.28px;">warning</div>
<div style="left:1638.80px;top:1362.43px;line-height:52px;font-family:'Liberation Sans', sans-serif;font-size:37.44px;color:#848484;letter-spacing:0.023px;white-space:pre;-webkit-text-stroke:0.28px;">Kind</div>
<div style="left:2025.70px;top:1362.43px;line-height:52px;font-family:'Liberation Sans', sans-serif;font-size:37.44px;color:#cccccc;letter-spacing:0.337px;white-space:pre;-webkit-text-stroke:0.28px;">open</div>
<div style="left:1638.80px;top:1418.03px;line-height:52px;font-family:'Liberation Sans', sans-serif;font-size:37.44px;color:#848484;letter-spacing:0.441px;white-space:pre;-webkit-text-stroke:0.28px;">Baseline State</div>
<div style="left:2025.70px;top:1418.03px;line-height:52px;font-family:'Liberation Sans', sans-serif;font-size:37.44px;color:#cccccc;letter-spacing:0.115px;white-space:pre;-webkit-text-stroke:0.28px;">new</div>
<div style="left:1638.80px;top:1473.63px;line-height:52px;font-family:'Liberation Sans', sans-serif;font-size:37.44px;color:#848484;letter-spacing:0.755px;white-space:pre;-webkit-text-stroke:0.28px;">Locations</div>
<div style="left:2025.70px;top:1473.63px;line-height:52px;font-family:'Liberation Sans', sans-serif;font-size:37.44px;color:#4daafc;letter-spacing:0.675px;white-space:pre;-webkit-text-stroke:0.28px;">lcp.ads</div>
<div style="left:1638.80px;top:1529.03px;line-height:52px;font-family:'Liberation Sans', sans-serif;font-size:37.44px;color:#848484;letter-spacing:0.021px;white-space:pre;-webkit-text-stroke:0.28px;">Log</div>
<div style="left:2025.70px;top:1529.03px;line-height:52px;font-family:'Liberation Sans', sans-serif;font-size:37.44px;color:#4daafc;letter-spacing:0.850px;white-space:pre;-webkit-text-stroke:0.28px;">gnatprove.sarif</div>
<div style="left:197.00px;top:1604.22px;line-height:44px;font-family:'Liberation Sans', sans-serif;font-size:31.68px;color:#e7e7e7;letter-spacing:-0.827px;white-space:pre;-webkit-text-stroke:0.28px;">PROBLEMS</div>
<div style="left:379.6px;top:1603.2px;width:65.5px;height:45.5px;background:#0f6fce;border-radius:22.8px"></div>
<div style="left:395.38px;top:1602.88px;line-height:43px;font-family:'Liberation Sans', sans-serif;font-size:30.5px;color:#ffffff;letter-spacing:0.000px;white-space:pre;-webkit-text-stroke:0.28px;">28</div>
<div style="left:190.2px;top:1656.9px;width:254.9px;height:2.4px;background:#0078d4;"></div>
<div style="left:509.40px;top:1604.22px;line-height:44px;font-family:'Liberation Sans', sans-serif;font-size:31.68px;color:#9d9d9d;letter-spacing:-0.017px;white-space:pre;-webkit-text-stroke:0.28px;">OUTPUT</div>
<div style="left:710.70px;top:1604.22px;line-height:44px;font-family:'Liberation Sans', sans-serif;font-size:31.68px;color:#9d9d9d;letter-spacing:-0.432px;white-space:pre;-webkit-text-stroke:0.28px;">DEBUG CONSOLE</div>
<div style="left:1052.90px;top:1604.22px;line-height:44px;font-family:'Liberation Sans', sans-serif;font-size:31.68px;color:#9d9d9d;letter-spacing:-0.193px;white-space:pre;-webkit-text-stroke:0.28px;">TERMINAL</div>
<div style="left:1282.40px;top:1604.22px;line-height:44px;font-family:'Liberation Sans', sans-serif;font-size:31.68px;color:#9d9d9d;letter-spacing:-0.849px;white-space:pre;-webkit-text-stroke:0.28px;">PORTS</div>
<div style="left:1457.70px;top:1604.22px;line-height:44px;font-family:'Liberation Sans', sans-serif;font-size:31.68px;color:#9d9d9d;letter-spacing:-0.490px;white-space:pre;-webkit-text-stroke:0.28px;">GITLENS</div>
<div style="left:1639.7px;top:1592.4px;width:994.7px;height:68px;background:#2b2b2b;border-radius:6px"></div>
<div style="left:1659.80px;top:1599.53px;line-height:52px;font-family:'Liberation Sans', sans-serif;font-size:37.44px;color:#8e8e8e;letter-spacing:-0.057px;white-space:pre;-webkit-text-stroke:0.28px;">Filter (e.g. text, **/*.ts, !**/node_modules/**)</div>
<svg style="left:2571.8px;top:1608.8px;" width="42" height="36" viewBox="0 0 42 36"><path d="M1.6 1.6 H40.4 V6.5 L26.2 21 V34 H15.8 V21 L1.6 6.5 Z" fill="none" stroke="#d0d0d0" stroke-width="3" stroke-linejoin="miter"/></svg>
<svg style="left:2660px;top:1608.3px;" width="36" height="36" viewBox="0 0 36 36"><path d="M10 8.3 V4.5 a3 3 0 0 1 3 -3 H31.5 a3 3 0 0 1 3 3 V23 a3 3 0 0 1 -3 3 H27.6" fill="none" stroke="#d0d0d0" stroke-width="3"/><rect x="1.5" y="9.8" width="24.6" height="24.6" rx="3" fill="none" stroke="#d0d0d0" stroke-width="3"/><path d="M7 22.1 H20.6" stroke="#d0d0d0" stroke-width="3"/></svg>
<div style="left:2735px;top:1612.3px;width:35.5px;height:2.9px;background:#d0d0d0;"></div>
<div style="left:2735px;top:1621.1px;width:26.5px;height:2.9px;background:#d0d0d0;"></div>
<div style="left:2735px;top:1629.8999999999999px;width:35.5px;height:2.9px;background:#d0d0d0;"></div>
<div style="left:2735px;top:1638.7px;width:20.5px;height:2.9px;background:#d0d0d0;"></div>
<div style="left:2808.2px;top:1603px;width:2.9px;height:45.5px;background:#5a5a5a;"></div>
<svg style="left:2846px;top:1607px;" width="40" height="40" viewBox="0 0 40 40"><path d="M3 12.5 V3 H12.5 M27.5 3 H37 V12.5 M37 27.5 V37 H27.5 M12.5 37 H3 V27.5" fill="none" stroke="#d0d0d0" stroke-width="3"/></svg>
<svg style="left:2927.5px;top:1613.5px;" width="27.5" height="27.5" viewBox="-1 -1 27.5 27.5"><path d="M0 0 L25.5 25.5 M25.5 0 L0 25.5" stroke="#d0d0d0" stroke-width="3.0" fill="none"/></svg>
<svg style="left:266.8px;top:1800.9px;" width="42.2" height="39.4" viewBox="-1 -1 42.2 39.4"><path d="M20.1 2.376 L38.154 35.75 L2.046 35.75 Z" fill="none" stroke="#d4a82c" stroke-width="3.3" stroke-linejoin="round"/><rect x="17.900000000000002" y="14.1" width="4.4" height="12.1" fill="#d4a82c"/><rect x="17.900000000000002" y="28.6" width="4.4" height="3.3" fill="#d4a82c"/></svg>
<div style="left:329.60px;top:1796.33px;line-height:52px;font-family:'Liberation Sans', sans-serif;font-size:37.44px;color:#cccccc;letter-spacing:0.919px;white-space:pre;-webkit-text-stroke:0.28px;">postcondition might fail, cannot prove A (X + K) = A (Y + K)</div>
<div style="left:1373.00px;top:1796.33px;line-height:52px;font-family:'Liberation Sans', sans-serif;font-size:37.44px;color:#9a9a9a;letter-spacing:-0.279px;white-space:pre;-webkit-text-stroke:0.28px;">ada</div>
<div style="left:1456.20px;top:1796.33px;line-height:52px;font-family:'Liberation Sans', sans-serif;font-size:37.44px;color:#9a9a9a;letter-spacing:0.445px;white-space:pre;-webkit-text-stroke:0.28px;">[Ln 14, Col 42]</div>
<svg style="left:266.8px;top:1864.3px;" width="42.2" height="39.4" viewBox="-1 -1 42.2 39.4"><path d="M20.1 2.376 L38.154 35.75 L2.046 35.75 Z" fill="none" stroke="#d4a82c" stroke-width="3.3" stroke-linejoin="round"/><rect x="17.900000000000002" y="14.1" width="4.4" height="12.1" fill="#d4a82c"/><rect x="17.900000000000002" y="28.6" width="4.4" height="3.3" fill="#d4a82c"/></svg>
<div style="left:329.60px;top:1859.69px;line-height:52px;font-family:'Liberation Sans', sans-serif;font-size:37.44px;color:#cccccc;letter-spacing:0.919px;white-space:pre;-webkit-text-stroke:0.28px;">postcondition might fail, cannot prove A (X + K) = A (Y + K)</div>
<div style="left:1374.40px;top:1859.69px;line-height:52px;font-family:'Liberation Sans', sans-serif;font-size:37.44px;color:#9a9a9a;letter-spacing:0.519px;white-space:pre;-webkit-text-stroke:0.28px;">[Ln 14, Col 42]</div>
<svg style="left:266.8px;top:1927.6px;" width="42.2" height="39.4" viewBox="-1 -1 42.2 39.4"><path d="M20.1 2.376 L38.154 35.75 L2.046 35.75 Z" fill="none" stroke="#d4a82c" stroke-width="3.3" stroke-linejoin="round"/><rect x="17.900000000000002" y="14.1" width="4.4" height="12.1" fill="#d4a82c"/><rect x="17.900000000000002" y="28.6" width="4.4" height="3.3" fill="#d4a82c"/></svg>
<div style="left:329.60px;top:1923.05px;line-height:52px;font-family:'Liberation Sans', sans-serif;font-size:37.44px;color:#cccccc;letter-spacing:0.918px;white-space:pre;-webkit-text-stroke:0.28px;">possible reassociation due to missing parentheses [operator-reassociation]</div>
<div style="left:1660.80px;top:1923.05px;line-height:52px;font-family:'Liberation Sans', sans-serif;font-size:37.44px;color:#9a9a9a;letter-spacing:0.805px;white-space:pre;-webkit-text-stroke:0.28px;">[Ln 20, Col 45]</div>
<svg style="left:266.4px;top:1990.7px;" width="42.4" height="42.4" viewBox="-21.2 -21.2 42.4 42.4"><circle r="18.55" fill="none" stroke="#3794ff" stroke-width="3.3"/><rect x="-2.2" y="-2.8" width="4.4" height="12" fill="#3794ff"/><rect x="-2.2" y="-8.9" width="4.4" height="3.1" fill="#3794ff"/></svg>
<div style="left:329.60px;top:1986.41px;line-height:52px;font-family:'Liberation Sans', sans-serif;font-size:37.44px;color:#cccccc;letter-spacing:0.862px;white-space:pre;-webkit-text-stroke:0.28px;">implicit aspect Always_Terminates on &quot;LCP&quot; has been proved, subprogram will terminate</div>
<div style="left:1891.80px;top:1986.41px;line-height:52px;font-family:'Liberation Sans', sans-serif;font-size:37.44px;color:#9a9a9a;letter-spacing:-0.068px;white-space:pre;-webkit-text-stroke:0.28px;">[Ln 10, Col 10]</div>
<svg style="left:266.4px;top:2054.0px;" width="42.4" height="42.4" viewBox="-21.2 -21.2 42.4 42.4"><circle r="18.55" fill="none" stroke="#3794ff" stroke-width="3.3"/><rect x="-2.2" y="-2.8" width="4.4" height="12" fill="#3794ff"/><rect x="-2.2" y="-8.9" width="4.4" height="3.1" fill="#3794ff"/></svg>
<div style="left:329.60px;top:2049.77px;line-height:52px;font-family:'Liberation Sans', sans-serif;font-size:37.44px;color:#cccccc;letter-spacing:0.759px;white-space:pre;-webkit-text-stroke:0.28px;">index check proved</div>
<div style="left:686.70px;top:2049.77px;line-height:52px;font-family:'Liberation Sans', sans-serif;font-size:37.44px;color:#9a9a9a;letter-spacing:0.479px;white-space:pre;-webkit-text-stroke:0.28px;">[Ln 14, Col 47]</div>
<svg style="left:266.4px;top:2117.4px;" width="42.4" height="42.4" viewBox="-21.2 -21.2 42.4 42.4"><circle r="18.55" fill="none" stroke="#3794ff" stroke-width="3.3"/><rect x="-2.2" y="-2.8" width="4.4" height="12" fill="#3794ff"/><rect x="-2.2" y="-8.9" width="4.4" height="3.1" fill="#3794ff"/></svg>
<div style="left:329.60px;top:2113.13px;line-height:52px;font-family:'Liberation Sans', sans-serif;font-size:37.44px;color:#cccccc;letter-spacing:0.759px;white-space:pre;-webkit-text-stroke:0.28px;">index check proved</div>
<div style="left:686.70px;top:2113.13px;line-height:52px;font-family:'Liberation Sans', sans-serif;font-size:37.44px;color:#9a9a9a;letter-spacing:0.545px;white-space:pre;-webkit-text-stroke:0.28px;">[Ln 14, Col 59]</div>
<svg style="left:266.4px;top:2180.8px;" width="42.4" height="42.4" viewBox="-21.2 -21.2 42.4 42.4"><circle r="18.55" fill="none" stroke="#3794ff" stroke-width="3.3"/><rect x="-2.2" y="-2.8" width="4.4" height="12" fill="#3794ff"/><rect x="-2.2" y="-8.9" width="4.4" height="3.1" fill="#3794ff"/></svg>
<div style="left:329.60px;top:2176.49px;line-height:52px;font-family:'Liberation Sans', sans-serif;font-size:37.44px;color:#cccccc;letter-spacing:0.759px;white-space:pre;-webkit-text-stroke:0.28px;">index check proved</div>
<div style="left:686.70px;top:2176.49px;line-height:52px;font-family:'Liberation Sans', sans-serif;font-size:37.44px;color:#9a9a9a;letter-spacing:0.092px;white-space:pre;-webkit-text-stroke:0.28px;">[Ln 17, Col 32]</div>
<svg style="left:266.4px;top:2244.1px;" width="42.4" height="42.4" viewBox="-21.2 -21.2 42.4 42.4"><circle r="18.55" fill="none" stroke="#3794ff" stroke-width="3.3"/><rect x="-2.2" y="-2.8" width="4.4" height="12" fill="#3794ff"/><rect x="-2.2" y="-8.9" width="4.4" height="3.1" fill="#3794ff"/></svg>
<div style="left:329.60px;top:2239.85px;line-height:52px;font-family:'Liberation Sans', sans-serif;font-size:37.44px;color:#cccccc;letter-spacing:0.759px;white-space:pre;-webkit-text-stroke:0.28px;">index check proved</div>
<div style="left:686.70px;top:2239.85px;line-height:52px;font-family:'Liberation Sans', sans-serif;font-size:37.44px;color:#9a9a9a;letter-spacing:0.219px;white-space:pre;-webkit-text-stroke:0.28px;">[Ln 17, Col 54]</div>
<svg style="left:266.4px;top:2307.5px;" width="42.4" height="42.4" viewBox="-21.2 -21.2 42.4 42.4"><circle r="18.55" fill="none" stroke="#3794ff" stroke-width="3.3"/><rect x="-2.2" y="-2.8" width="4.4" height="12" fill="#3794ff"/><rect x="-2.2" y="-8.9" width="4.4" height="3.1" fill="#3794ff"/></svg>
<div style="left:329.60px;top:2303.21px;line-height:52px;font-family:'Liberation Sans', sans-serif;font-size:37.44px;color:#cccccc;letter-spacing:0.966px;white-space:pre;-webkit-text-stroke:0.28px;">disjoint contract or exit cases proved</div>
<div style="left:992.70px;top:2303.21px;line-height:52px;font-family:'Liberation Sans', sans-serif;font-size:37.44px;color:#9a9a9a;letter-spacing:0.378px;white-space:pre;-webkit-text-stroke:0.28px;">[Ln 18, Col 3]</div>
<svg style="left:266.4px;top:2370.8px;" width="42.4" height="42.4" viewBox="-21.2 -21.2 42.4 42.4"><circle r="18.55" fill="none" stroke="#3794ff" stroke-width="3.3"/><rect x="-2.2" y="-2.8" width="4.4" height="12" fill="#3794ff"/><rect x="-2.2" y="-8.9" width="4.4" height="3.1" fill="#3794ff"/></svg>
<div style="left:329.60px;top:2366.57px;line-height:52px;font-family:'Liberation Sans', sans-serif;font-size:37.44px;color:#cccccc;letter-spacing:0.950px;white-space:pre;-webkit-text-stroke:0.28px;">contract case proved</div>
<div style="left:718.00px;top:2366.57px;line-height:52px;font-family:'Liberation Sans', sans-serif;font-size:37.44px;color:#9a9a9a;letter-spacing:0.114px;white-space:pre;-webkit-text-stroke:0.28px;">[Ln 19, Col 7]</div>
<svg style="left:266.4px;top:2434.2px;" width="42.4" height="42.4" viewBox="-21.2 -21.2 42.4 42.4"><circle r="18.55" fill="none" stroke="#3794ff" stroke-width="3.3"/><rect x="-2.2" y="-2.8" width="4.4" height="12" fill="#3794ff"/><rect x="-2.2" y="-8.9" width="4.4" height="3.1" fill="#3794ff"/></svg>
<div style="left:329.60px;top:2429.93px;line-height:52px;font-family:'Liberation Sans', sans-serif;font-size:37.44px;color:#cccccc;letter-spacing:0.759px;white-space:pre;-webkit-text-stroke:0.28px;">index check proved</div>
<div style="left:686.70px;top:2429.93px;line-height:52px;font-family:'Liberation Sans', sans-serif;font-size:37.44px;color:#9a9a9a;letter-spacing:0.092px;white-space:pre;-webkit-text-stroke:0.28px;">[Ln 19, Col 10]</div>
<svg style="left:266.4px;top:2497.6px;" width="42.4" height="42.4" viewBox="-21.2 -21.2 42.4 42.4"><circle r="18.55" fill="none" stroke="#3794ff" stroke-width="3.3"/><rect x="-2.2" y="-2.8" width="4.4" height="12" fill="#3794ff"/><rect x="-2.2" y="-8.9" width="4.4" height="3.1" fill="#3794ff"/></svg>
<div style="left:329.60px;top:2493.29px;line-height:52px;font-family:'Liberation Sans', sans-serif;font-size:37.44px;color:#cccccc;letter-spacing:0.759px;white-space:pre;-webkit-text-stroke:0.28px;">index check proved</div>
<div style="left:686.70px;top:2493.29px;line-height:52px;font-family:'Liberation Sans', sans-serif;font-size:37.44px;color:#9a9a9a;letter-spacing:0.159px;white-space:pre;-webkit-text-stroke:0.28px;">[Ln 19, Col 19]</div>
<svg style="left:266.4px;top:2560.9px;" width="42.4" height="42.4" viewBox="-21.2 -21.2 42.4 42.4"><circle r="18.55" fill="none" stroke="#3794ff" stroke-width="3.3"/><rect x="-2.2" y="-2.8" width="4.4" height="12" fill="#3794ff"/><rect x="-2.2" y="-8.9" width="4.4" height="3.1" fill="#3794ff"/></svg>
<div style="left:329.60px;top:2556.65px;line-height:52px;font-family:'Liberation Sans', sans-serif;font-size:37.44px;color:#cccccc;letter-spacing:0.950px;white-space:pre;-webkit-text-stroke:0.28px;">contract case proved</div>
<div style="left:718.00px;top:2556.65px;line-height:52px;font-family:'Liberation Sans', sans-serif;font-size:37.44px;color:#9a9a9a;letter-spacing:0.528px;white-space:pre;-webkit-text-stroke:0.28px;">[Ln 20, Col 7]</div>
<svg style="left:266.4px;top:2624.3px;" width="42.4" height="42.4" viewBox="-21.2 -21.2 42.4 42.4"><circle r="18.55" fill="none" stroke="#3794ff" stroke-width="3.3"/><rect x="-2.2" y="-2.8" width="4.4" height="12" fill="#3794ff"/><rect x="-2.2" y="-8.9" width="4.4" height="3.1" fill="#3794ff"/></svg>
<div style="left:329.60px;top:2620.01px;line-height:52px;font-family:'Liberation Sans', sans-serif;font-size:37.44px;color:#cccccc;letter-spacing:0.950px;white-space:pre;-webkit-text-stroke:0.28px;">contract case proved</div>
<div style="left:718.00px;top:2620.01px;line-height:52px;font-family:'Liberation Sans', sans-serif;font-size:37.44px;color:#9a9a9a;letter-spacing:0.114px;white-space:pre;-webkit-text-stroke:0.28px;">[Ln 21, Col 7]</div>
<svg style="left:176.6px;top:1750.5px;" width="32.5" height="19.5" viewBox="-2 -2 32.5 19.5"><path d="M0 0 L14.25 14.5 L28.5 0" fill="none" stroke="#c5c5c5" stroke-width="3.0"/></svg>
<div style="left:246px;top:1745.7px;width:24.4px;height:3.4px;background:#c5c5c5;"></div>
<div style="left:246px;top:1753.0px;width:13.4px;height:3.4px;background:#c5c5c5;"></div>
<div style="left:246px;top:1760.5px;width:24.4px;height:3.4px;background:#c5c5c5;"></div>
<div style="left:246px;top:1767.9px;width:18.3px;height:3.4px;background:#c5c5c5;"></div>
<div style="left:289.50px;top:1732.83px;line-height:52px;font-family:'Liberation Sans', sans-serif;font-size:37.44px;color:#cccccc;letter-spacing:0.632px;white-space:pre;-webkit-text-stroke:0.28px;">lcp.ads</div>
<div style="left:441.9px;top:1737px;width:69.9px;height:51.5px;background:#4f4f4f;border-radius:25.8px"></div>
<div style="left:459.88px;top:1739.68px;line-height:43px;font-family:'Liberation Sans', sans-serif;font-size:30.5px;color:#ffffff;letter-spacing:0.000px;white-space:pre;-webkit-text-stroke:0.28px;">14</div>
<div style="left:138px;top:1668px;width:2870px;height:62.3px;background:#181818;"></div>
<div style="left:138px;top:1730.3px;width:2870px;height:8px;background:linear-gradient(#0c0c0c,rgba(24,24,24,0))"></div>
<svg style="left:176.6px;top:1689.8px;" width="32.5" height="19.5" viewBox="-2 -2 32.5 19.5"><path d="M0 0 L14.25 14.5 L28.5 0" fill="none" stroke="#c5c5c5" stroke-width="3.0"/></svg>
<div style="left:246px;top:1684.9px;width:24.4px;height:3.4px;background:#c5c5c5;"></div>
<div style="left:246px;top:1692.2px;width:13.4px;height:3.4px;background:#c5c5c5;"></div>
<div style="left:246px;top:1699.7px;width:24.4px;height:3.4px;background:#c5c5c5;"></div>
<div style="left:246px;top:1707.1px;width:18.3px;height:3.4px;background:#c5c5c5;"></div>
<div style="left:289.50px;top:1672.03px;line-height:52px;font-family:'Liberation Sans', sans-serif;font-size:37.44px;color:#cccccc;letter-spacing:0.761px;white-space:pre;-webkit-text-stroke:0.28px;">lcp.adb</div>
<div style="left:445.7px;top:1676.9px;width:70.5px;height:52.0px;background:#4f4f4f;border-radius:26.0px"></div>
<div style="left:463.98px;top:1679.83px;line-height:43px;font-family:'Liberation Sans', sans-serif;font-size:30.5px;color:#ffffff;letter-spacing:0.000px;white-space:pre;-webkit-text-stroke:0.28px;">14</div>
<svg style="left:28.84px;top:35.74px;" width="80.64" height="80.64" viewBox="-2 -2 28 28"><path fill="#808080" fill-rule="evenodd" d="M17.5 0h-9L7 1.5V6H2.5L1 7.5v15.07L2.5 24h12.07L16 22.57V18h4.7l1.3-1.43V4.5L17.5 0zm0 2.12l2.38 2.38H17.5V2.12zm-3 20.38h-12v-15H7v9.07L8.5 18h6v4.5zm6-6h-12v-15H16V6h4.5v10.5z"/></svg>
<svg style="left:28.54px;top:175.14px;" width="80.64" height="80.64" viewBox="-2 -2 28 28"><path fill="#808080" fill-rule="evenodd" d="M15.25 0a8.25 8.25 0 0 0-6.18 13.72L1 22.88l1.12 1 8.05-9.12A8.251 8.251 0 1 0 15.25.01V0zm0 15a6.75 6.75 0 1 1 0-13.5 6.75 6.75 0 0 1 0 13.5z"/></svg>
<svg style="left:28.3px;top:313.14px;" width="80.64" height="80.64" viewBox="-2 -2 28 28"><path fill="#808080" fill-rule="evenodd" d="M21.007 8.222A3.738 3.738 0 0 0 15.045 5.2a3.737 3.737 0 0 0 1.156 6.583 2.988 2.988 0 0 1-2.668 1.67h-2.99a4.456 4.456 0 0 0-2.989 1.165V7.4a3.737 3.737 0 1 0-1.494 0v9.117a3.776 3.776 0 1 0 1.816.099 2.99 2.99 0 0 1 2.668-1.667h2.99a4.484 4.484 0 0 0 4.223-3.039 3.736 3.736 0 0 0 3.25-3.687zM4.565 3.738a2.242 2.242 0 1 1 4.484 0 2.242 2.242 0 0 1-4.484 0zm4.484 16.441a2.242 2.242 0 1 1-4.484 0 2.242 2.242 0 0 1 4.484 0zm8.221-9.715a2.242 2.242 0 1 1 0-4.485 2.242 2.242 0 0 1 0 4.485z"/></svg>
<svg style="left:28.24px;top:451.04px;" width="80.64" height="80.64" viewBox="-2 -2 28 28"><path fill="#808080" fill-rule="evenodd" d="M10.94 13.5l-1.32 1.32a3.73 3.73 0 0 0-7.24 0L1.06 13.5 0 14.56l1.72 1.72-.22.22V18H0v1.5h1.5v.08c.077.489.214.966.41 1.42L0 22.94 1.06 24l1.65-1.65A4.308 4.308 0 0 0 6 24a4.31 4.31 0 0 0 3.29-1.65L10.94 24 12 22.94 10.09 21c.198-.464.336-.951.41-1.45v-.1H12V18h-1.5v-1.5l-.22-.22L12 14.56l-1.06-1.06zM6 13.5a2.25 2.25 0 0 1 2.25 2.25h-4.5A2.25 2.25 0 0 1 6 13.5zm3 6a3.33 3.33 0 0 1-3 3 3.33 3.33 0 0 1-3-3v-2.25h6v2.25zm14.76-9.9v1.26L13.5 17.37V15.6l8.5-5.37L9 2v9.46a5.07 5.07 0 0 0-1.5-.72V.63L8.64 0l15.12 9.6z"/></svg>
<svg style="left:28.24px;top:590.24px;" width="80.64" height="80.64" viewBox="-2 -2 28 28"><g fill="none" stroke="#808080" stroke-width="1.5" stroke-linejoin="round"><path d="M12.604166666666666 3.402777777777762 H3.4722222222222223 V21.354166666666668 H21.38888888888889 V12.5 H3.4722222222222223 M12.604166666666666 3.402777777777762 V21.354166666666668"/><path d="M17.8125 2.152777777777769 L22.743055555555557 7.083333333333326 L17.8125 12.013888888888882 L12.881944444444443 7.083333333333326 Z"/></g></svg>
<svg style="left:28.24px;top:727.24px;" width="80.64" height="80.64" viewBox="-2 -2 28 28"><g fill="none" stroke="#808080" stroke-width="1.5" stroke-linejoin="round"><path d="M11.11111111111111 19.166666666666682 H1.5625 V3.1597222222222303 H21.631944444444443 V12.152777777777779"/><path d="M5.555555555555555 22.013888888888882 H11.11111111111111"/><circle cx="17.95138888888889" cy="18.055555555555557" r="5.5"/><path stroke-width="1.1" d="M15.051388888888889 17.755555555555556 L16.95138888888889 19.555555555555557 L15.051388888888889 21.355555555555558 M20.851388888888888 14.555555555555557 L18.95138888888889 16.355555555555558 L20.851388888888888 18.15555555555556"/></g></svg>
<svg style="left:28.24px;top:865.24px;" width="80.64" height="80.64" viewBox="-2 -2 28 28"><g fill="none" stroke="#808080" stroke-width="1.5" stroke-linejoin="round"><path d="M7.638888888888889 2.638888888888897 H16.59722222222222"/><path d="M9.930555555555557 2.7777777777777777 V9.722222222222223 L4.027777777777779 20.833333333333336 Q3.6805555555555562 21.94444444444446 4.861111111111112 21.94444444444446 H19.583333333333336 Q20.694444444444443 21.94444444444446 20.34722222222222 20.833333333333336 L14.51388888888889 9.722222222222223 V2.7777777777777777"/><path d="M7.118055555555556 15.972222222222223 H17.36111111111111"/></g></svg>
<svg style="left:28.24px;top:1004.18px;" width="80.64" height="80.64" viewBox="-2 -2 28 28"><circle cx="12.222222222222223" cy="12.0" r="11.25" fill="none" stroke="#808080" stroke-width="1.45"/><path d="M10.312500000000002 6.2 V17.8 M10.312500000000002 6.2 L16.42361111111111 12.25" stroke="#808080" stroke-width="1.4" fill="none"/><circle cx="10.312500000000002" cy="6.2" r="2.3" fill="#808080"/><circle cx="10.312500000000002" cy="17.8" r="2.3" fill="#808080"/><circle cx="16.42361111111111" cy="12.25" r="2.3" fill="#808080"/></svg>
<svg style="left:28.24px;top:1141.98px;" width="80.64" height="80.64" viewBox="-2 -2 28 28"><circle cx="12.222222222222223" cy="12.0" r="11.25" fill="none" stroke="#808080" stroke-width="1.45"/><path d="M10.312500000000002 6.2 V17.8 M10.312500000000002 6.2 L16.42361111111111 12.25" stroke="#808080" stroke-width="1.4" fill="none"/><circle cx="10.312500000000002" cy="6.2" r="2.3" fill="#808080"/><circle cx="10.312500000000002" cy="17.8" r="2.3" fill="#808080"/><circle cx="18.125" cy="17.9" r="7.0" fill="#181818"/><circle cx="18.125" cy="17.9" r="6.1" fill="#808080"/><circle cx="17.525" cy="17.4" r="3.35" fill="none" stroke="#181818" stroke-width="1.3"/><path d="M20.125 20.099999999999998 L21.425 21.4" stroke="#181818" stroke-width="1.5" stroke-linecap="round"/></svg>
<svg style="left:28.68px;top:1280.18px;" width="80.64" height="80.64" viewBox="-2 -2 28 28"><circle cx="12" cy="12" r="12.083333333333332" fill="#808080"/><g transform="translate(1.6180555555555554 1.6180555555555554) scale(1.2977430555555556)"><path d="M8 0C3.58 0 0 3.58 0 8c0 3.54 2.29 6.53 5.47 7.59.4.07.55-.17.55-.38 0-.19-.01-.82-.01-1.49-2.01.37-2.53-.49-2.69-.94-.09-.23-.48-.94-.82-1.13-.28-.15-.68-.52-.01-.53.63-.01 1.08.58 1.23.82.72 1.21 1.87.87 2.33.66.07-.52.28-.87.51-1.07-1.78-.2-3.64-.89-3.64-3.95 0-.87.31-1.59.82-2.15-.08-.2-.36-1.02.08-2.12 0 0 .67-.21 2.2.82.64-.18 1.32-.27 2-.27.68 0 1.36.09 2 .27 1.53-1.04 2.2-.82 2.2-.82.44 1.1.16 1.92.08 2.12.51.56.82 1.27.82 2.15 0 3.07-1.87 3.75-3.65 3.95.29.25.54.73.54 1.48 0 1.07-.01 1.93-.01 2.2 0 .21.15.46.55.38A8.013 8.013 0 0 0 16 8c0-4.42-3.58-8-8-8z" fill="#181818"/></g></svg>
<svg style="left:28.88px;top:2430.18px;" width="80.64" height="80.64" viewBox="-2 -2 28 28"><defs><clipPath id="acc"><circle cx="12" cy="12" r="11.25"/></clipPath></defs><g fill="none" stroke="#808080" stroke-width="1.6"><circle cx="12" cy="12" r="11.25"/><circle cx="12" cy="9.604166666666666" r="4.791666666666667"/><circle cx="12" cy="21.743055555555557" r="6.666666666666667" clip-path="url(#acc)"/></g></svg>
<svg style="left:28.68px;top:2568.28px;" width="80.64" height="80.64" viewBox="-2 -2 28 28"><path fill="#808080" fill-rule="evenodd" d="M19.85 8.75l4.15.83v4.84l-4.15.83 2.35 3.52-3.43 3.43-3.52-2.35-.83 4.15H9.58l-.83-4.15-3.52 2.35-3.43-3.43 2.35-3.52L0 14.42V9.58l4.15-.83L1.8 5.23 5.23 1.8l3.52 2.35L9.58 0h4.84l.83 4.15 3.52-2.35 3.43 3.43-2.35 3.52zm-1.57 5.07l4-.81v-2l-4-.81-.54-1.3 2.29-3.43-1.43-1.43-3.43 2.29-1.3-.54-.81-4h-2l-.81 4-1.3.54-3.43-2.29-1.43 1.43L6.38 8.9l-.54 1.3-4 .81v2l4 .81.54 1.3-2.29 3.43 1.43 1.43 3.43-2.29 1.3.54.81 4h2l.81-4 1.3-.54 3.43 2.29 1.43-1.43-2.29-3.43.54-1.3z"/><circle cx="12" cy="12" r="2.68" fill="none" stroke="#808080" stroke-width="1.6"/></svg>
</div></body></html>
